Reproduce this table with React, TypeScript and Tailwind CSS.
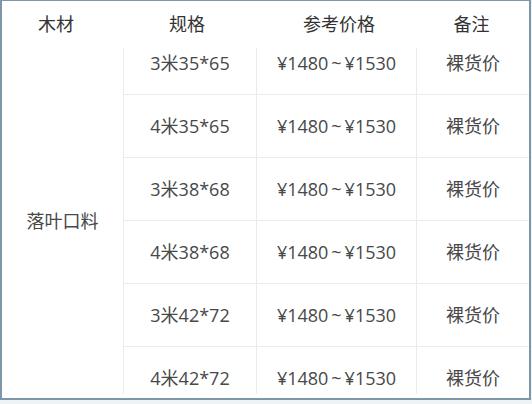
const specs = ['3米35*65', '4米35*65', '3米38*68', '4米38*68', '3米42*72', '4米42*72'];

export default function App() {
  return (
    <div className="w-[532px] h-[404px] bg-[#eef3f6] font-['Open_Sans','Noto_Sans_CJK_SC',sans-serif]">
      <div className="w-[531px] h-[400px] bg-white border-t border-l-2 border-r-2 border-b-2 border-[#7d97a7] flex flex-col">
        {/* Header */}
        <div className="flex h-[47px] items-center text-[18px] text-[#333]">
          <div className="w-[108px] text-center">木材</div>
          <div className="w-[154px] text-center">规格</div>
          <div className="w-[150px] text-center">参考价格</div>
          <div className="flex-1 text-center">备注</div>
        </div>

        {/* Body, scrolled */}
        <div className="h-[346px] overflow-hidden">
          <div className="flex -mt-[16px] text-[18px] text-[#484848]">
            <div className="w-[122px] border-r border-[#ebebeb] flex items-center justify-center">
              落叶口料
            </div>
            <div className="flex-1 flex flex-col">
              {specs.map(s => (
                <div key={s} className="flex h-[63px] border-b border-[#ebebeb]">
                  <div className="w-[133px] border-r border-[#ebebeb] flex items-center justify-center">{s}</div>
                  <div className="w-[160px] border-r border-[#ebebeb] flex items-center justify-center">{'¥1480\u2009~\u2009¥1530'}</div>
                  <div className="flex-1 flex items-center justify-center">裸货价</div>
                </div>
              ))}
            </div>
          </div>
        </div>
      </div>
    </div>
  );
}
